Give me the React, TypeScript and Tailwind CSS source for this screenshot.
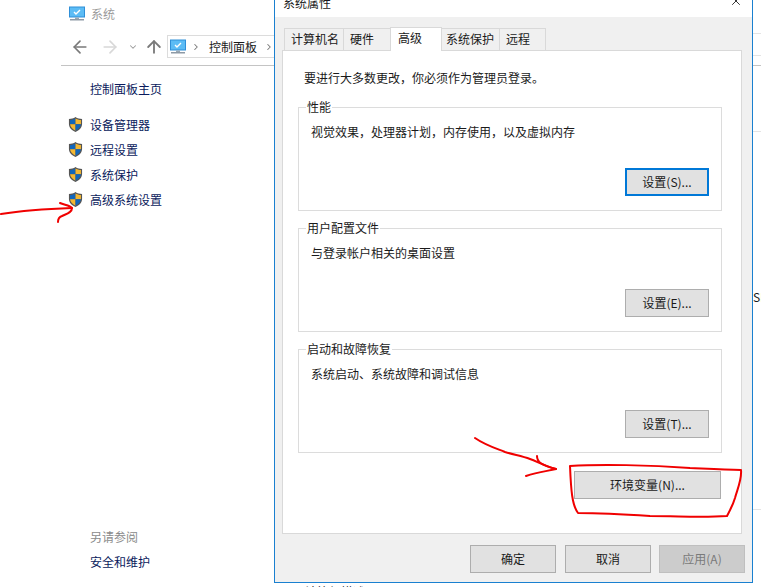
import React from "react";
import { ArrowLeft, ArrowRight, ArrowUp, ChevronDown, ChevronRight, X } from "lucide-react";

const font = "font-['Noto_Sans_CJK_SC','Liberation_Sans',sans-serif]";

function Monitor({ className }: { className: string }) {
  return (
    <svg viewBox="0 0 16 16" className={className}>
      <rect x="0.5" y="1" width="15" height="10" fill="#5cbcf5" stroke="#2f8fd8" />
      <path d="M5 6l2 2 4-4" fill="none" stroke="#fff" strokeWidth="1.4" />
      <rect x="6" y="11.5" width="4" height="1.5" fill="#9aa7b2" />
      <rect x="1" y="13" width="14" height="1.5" fill="#8d9aa6" />
    </svg>
  );
}

function Shield() {
  return (
    <svg viewBox="0 0 16 17" className="w-[15px] h-[17px] shrink-0">
      <path d="M8 .5C6 2 3.500 2.500 1 2.500V8c0 4 3 6.800 7 8.500 4-1.700 7-4.500 7-8.500V2.500C12.500 2.500 10 2 8 .5z" fill="#555" />
      <path d="M8 2C6.500 3 4.500 3.500 2.200 3.700V8.300H8z" fill="#1166bb" />
      <path d="M8 2c1.500 1 3.500 1.500 5.800 1.700v4.600H8z" fill="#f4b731" />
      <path d="M2.200 8.300C2.500 11 5 13.800 8 15.200V8.300z" fill="#f4b731" />
      <path d="M13.800 8.300C13.500 11 11 13.800 8 15.200V8.300z" fill="#1166bb" />
    </svg>
  );
}

function SideLink({ label }: { label: string }) {
  return (
    <div className="flex items-center h-[25px]">
      <div className="w-[29px] pl-[7px]">
        <Shield />
      </div>
      <span className="text-[12px] text-[#0a1a5c]">{label}</span>
    </div>
  );
}

function Group({ title, text, button, focused }: { title: string; text: string; button: string; focused?: boolean }) {
  return (
    <div className="relative border border-[#dcdcdc] h-[104px] px-[12px] pt-[16px]">
      <span className="absolute left-[7px] -top-[9px] bg-white px-[1px] text-[12px] leading-[16px] text-[#1a1a1a]">{title}</span>
      <p className="text-[12px] leading-[16px] text-[#1a1a1a]">{text}</p>
      <div className="flex justify-end mt-[28px]">
        <button
          className={`w-[84px] h-[28px] bg-[#e1e1e1] text-[12px] text-[#1a1a1a] ${
            focused ? "border-2 border-[#0078d7]" : "border border-[#adadad]"
          }`}
        >
          {button}
        </button>
      </div>
    </div>
  );
}

function FooterButton({ label, disabled }: { label: string; disabled?: boolean }) {
  return (
    <button
      className={`w-[86px] h-[28px] border text-[12px] ${
        disabled ? "bg-[#cccccc] border-[#bfbfbf] text-[#7a7a7a]" : "bg-[#e1e1e1] border-[#adadad] text-[#1a1a1a]"
      }`}
    >
      {label}
    </button>
  );
}

export default function App() {
  const tabs = [
    { label: "计算机名", cls: "w-[60px] pl-[6px]" },
    { label: "硬件", cls: "w-[48px] pl-[6px]" },
    { label: "高级", cls: "" },
    { label: "系统保护", cls: "w-[59px] pl-[4px]" },
    { label: "远程", cls: "w-[47px] pl-[6px]" },
  ];

  return (
    <div className={`relative w-[761px] h-[587px] overflow-hidden bg-white flex ${font}`}>
      {/* control panel behind the dialog */}
      <div className="w-[274px] shrink-0 pl-[61px] flex flex-col">
        <div className="h-[28px] flex items-center gap-[6px] pl-[8px]">
          <Monitor className="w-[16px] h-[16px]" />
          <span className="text-[12px] text-[#9a9a9a]">系统</span>
        </div>
        <div className="h-[38px] flex items-center border-b border-[#c4c4c4] pl-[9px]">
          <ArrowLeft size={20} strokeWidth={2} className="text-[#7a7a7a]" />
          <ArrowRight size={20} strokeWidth={2} className="text-[#d8d8d8] ml-[10px]" />
          <ChevronDown size={10} strokeWidth={2.500} className="text-[#9a9a9a] ml-[8px]" />
          <ArrowUp size={20} strokeWidth={2.200} className="text-[#7a7a7a] ml-[6px]" />
          <div className="ml-[3px] flex-1 h-[23px] border border-r-0 border-[#dcdcdc] flex items-center pl-[2px]">
            <Monitor className="w-[16px] h-[16px] shrink-0" />
            <ChevronRight size={10} strokeWidth={2.500} className="text-[#777] ml-[5px] shrink-0" />
            <span className="text-[12px] text-[#1a1a1a] ml-[8px] whitespace-nowrap">控制面板</span>
            <ChevronRight size={10} strokeWidth={2.500} className="text-[#777] ml-[7px] shrink-0" />
          </div>
        </div>
        <div className="pl-[29px] pt-[14px] text-[12px] leading-[18px] text-[#0a1a5c]">控制面板主页</div>
        <div className="mt-[14px] flex flex-col">
          <SideLink label="设备管理器" />
          <SideLink label="远程设置" />
          <SideLink label="系统保护" />
          <SideLink label="高级系统设置" />
        </div>
        <div className="mt-auto pb-[16px] pl-[29px] flex flex-col gap-[7px]">
          <span className="text-[12px] leading-[18px] text-[#8a8a8a]">另请参阅</span>
          <span className="text-[12px] leading-[18px] text-[#0a1a5c]">安全和维护</span>
        </div>
      </div>

      {/* system properties dialog */}
      <div className="w-[479px] h-[583px] shrink-0 border-x border-b border-[#1a80d0] bg-[#f0f0f0] flex flex-col">
        <div className="h-[17px] bg-white flex justify-between overflow-hidden">
          <span className="pl-[8px] -mt-[6px] text-[12px] leading-[18px] text-[#1a1a1a]">系统属性</span>
          <X size={14} strokeWidth={1.500} className="text-[#1a1a1a] mr-[9px] -mt-[6px]" />
        </div>
        <div className="flex pl-[9px] pt-[9px] h-[33px] items-end">
          {tabs.map((t, i) =>
            i === 2 ? (
              <div
                key={t.label}
                className="relative z-10 h-[24px] -mb-[1px] w-[52px] -mr-[1px] bg-white border border-b-0 border-[#d9d9d9] text-[12px] text-[#1a1a1a] pl-[7px] leading-[20px]"
              >
                {t.label}
              </div>
            ) : (
              <div
                key={t.label}
                className={`h-[22px] border border-b-0 border-[#d9d9d9] bg-[#f0f0f0] text-[12px] text-[#1a1a1a] leading-[20px] -mr-[1px] ${t.cls}`}
              >
                {t.label}
              </div>
            )
          )}
        </div>
        <div className="ml-[7px] mr-[10px] h-[484px] border border-[#d9d9d9] bg-white pl-[15px] pr-[19px] flex flex-col">
          <p className="pt-[19px] pl-[6px] text-[12px] leading-[16px] text-[#1a1a1a]">要进行大多数更改，你必须作为管理员登录。</p>
          <div className="mt-[21px] flex flex-col gap-[17px]">
            <Group title="性能" text="视觉效果，处理器计划，内存使用，以及虚拟内存" button="设置(S)..." focused />
            <Group title="用户配置文件" text="与登录帐户相关的桌面设置" button="设置(E)..." />
            <Group title="启动和故障恢复" text="系统启动、系统故障和调试信息" button="设置(T)..." />
          </div>
          <div className="flex justify-end pr-[1px] mt-[18px]">
            <button className="w-[147px] h-[28px] bg-[#e1e1e1] border border-[#adadad] text-[12px] text-[#1a1a1a]">环境变量(N)...</button>
          </div>
        </div>
        <div className="flex justify-end pr-[7px] pt-[11px]">
          <div className="flex gap-[9px] mr-[8px]">
            <FooterButton label="确定" />
            <FooterButton label="取消" />
          </div>
          <FooterButton label="应用(A)" disabled />
        </div>
      </div>

      {/* sliver of the page to the right of the dialog */}
      <div className="flex-1 relative">
        <div className="h-[34px] border-b border-[#e4e4e4]" />
        <div className="h-[22px] border-b border-[#e4e4e4]" />
        <div className="h-[10px] border-b border-[#c4c4c4]" />
        <div className="h-[66px] border-b border-[#e4e4e4]" />
        <span className="block mt-[157px] text-[12px] leading-[16px] text-[#1a1a1a] whitespace-nowrap">SH</span>
        <div className="mt-[204px] border-b border-[#e4e4e4]" />
      </div>

      {/* text of the page showing under the dialog */}
      <span className="absolute left-[305px] top-[584px] text-[12px] leading-[16px] text-[#1a1a1a] whitespace-nowrap">计算机描述</span>

      {/* red pen annotations */}
      <svg viewBox="0 0 761 587" className="absolute inset-0 w-[761px] h-[587px] pointer-events-none" fill="none" stroke="#f00000" strokeWidth="2" strokeLinecap="round" strokeLinejoin="round">
        <path d="M1 214C20 211 45 209 72 208" />
        <path d="M60 203C64 205 70 205 72 208C72 213 66 214 62 216C59 217 58 219 58 222" />
        <path d="M475 438C485 445 495 448 505 452C515 455 522 456 530 459C538 462 545 466 556 469C548 471 538 472 526 476" />
        <path d="M537 456C537 462 541 465 556 469" />
        <path d="M570 466C600 464 650 465 690 468C710 469 725 470 741 470C742 480 737 490 735 498C733 505 730 510 727 516C700 518 680 516 650 516C620 514 600 513 578 513C572 505 571 490 570 466z" />
      </svg>
    </div>
  );
}
